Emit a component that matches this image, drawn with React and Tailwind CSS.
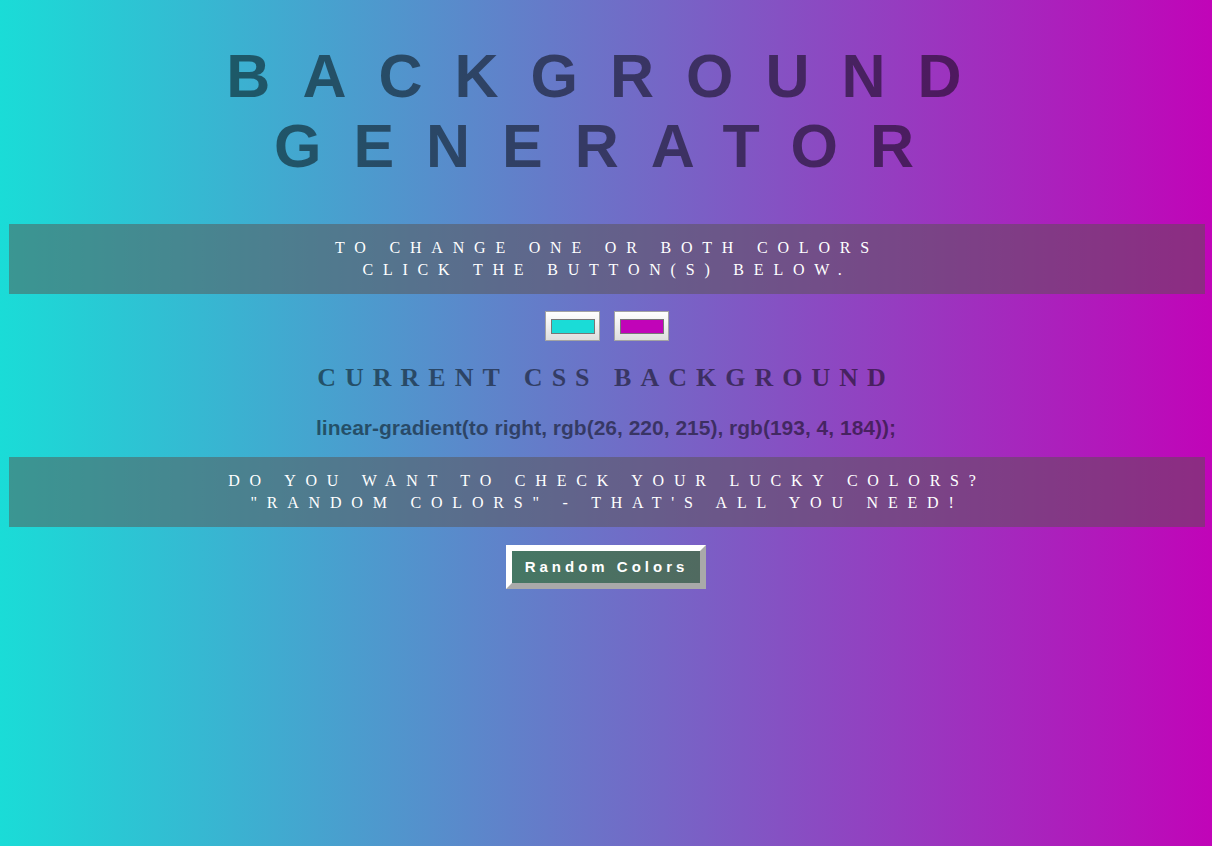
import React from 'react'

function Banner({ lines }) {
  return (
    <div className='ml-[9px] mr-[7px] py-[13px] bg-[rgba(90,82,78,0.5)] font-["Liberation_Serif","Times_New_Roman",serif] text-[16px] leading-[22px] tracking-[9.8px] text-white uppercase'>
      {lines.map((l, i) => (
        <div key={i}>{l}</div>
      ))}
    </div>
  )
}

function Swatch({ color }) {
  return (
    <div className='w-[55px] h-[30px] border border-[#a3a3a3] bg-gradient-to-b from-white to-[#dedede] flex items-center justify-center'>
      <div className={`w-[44px] h-[15px] border border-[#777777] ${color}`}></div>
    </div>
  )
}

export default function App() {
  return (
    <div className='min-h-screen w-full bg-[linear-gradient(to_right,rgb(26,220,215),rgb(193,4,184))] pt-[41px] pb-10 text-center'>
      {/* Title */}
      <h1 className='pl-[8px] font-["Liberation_Sans",Arial,sans-serif] font-bold text-[61px] leading-[70px] tracking-[32px] text-[rgba(0,0,0,0.5)] uppercase'>
        <div>Background</div>
        <div>Generator</div>
      </h1>

      <div className='mt-[43px]'>
        <Banner lines={['To change one or both colors', 'click the button(s) below.']} />
      </div>

      {/* color pickers */}
      <div className='mt-[17px] pl-[2px] flex justify-center gap-[14px]'>
        <Swatch color='bg-[rgb(26,220,215)]' />
        <Swatch color='bg-[rgb(193,4,184)]' />
      </div>

      <h3 className='mt-[22px] font-["Liberation_Serif","Times_New_Roman",serif] font-bold text-[26px] leading-[30px] tracking-[9px] text-[rgba(0,0,0,0.5)] uppercase'>
        Current CSS Background
      </h3>

      <p className='mt-[23px] font-["Liberation_Sans",Arial,sans-serif] font-bold text-[21px] leading-[24px] text-[rgba(0,0,0,0.5)]'>
        linear-gradient(to right, rgb(26, 220, 215), rgb(193, 4, 184));
      </p>

      <div className='mt-[17px]'>
        <Banner lines={['Do you want to check your lucky colors?', '"Random colors" - that\'s all you need!']} />
      </div>

      <div className='mt-[18px] flex justify-center'>
        <button className='border-[6px] border-t-white border-l-white border-b-[#a9a9a9] border-r-[#a9a9a9] bg-gradient-to-r from-[#457764] to-[#506a60] pl-[13px] pr-[12px] h-[44px] font-["Liberation_Sans",Arial,sans-serif] font-bold text-[15px] tracking-[4px] text-white'>
          Random Colors
        </button>
      </div>
    </div>
  )
}
